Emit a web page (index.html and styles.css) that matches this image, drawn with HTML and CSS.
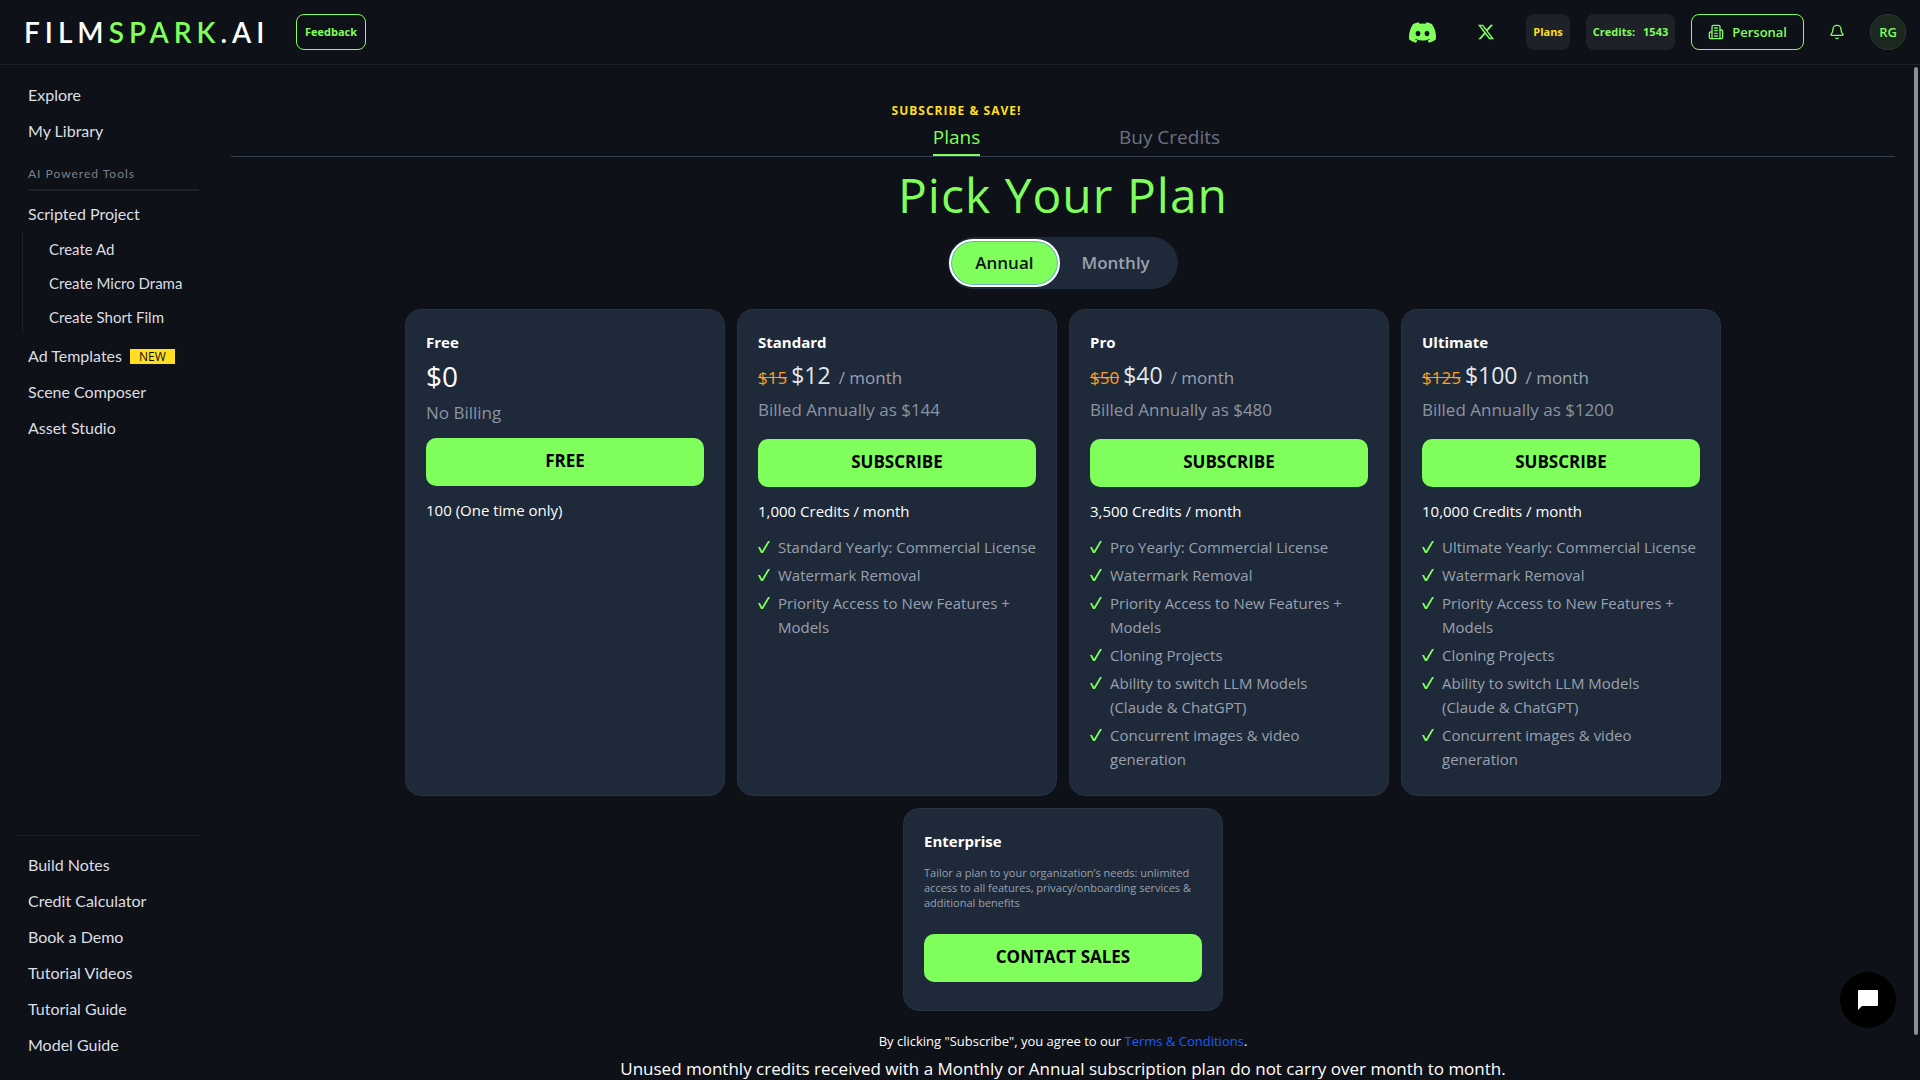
FILE: index.html
```html
<!DOCTYPE html>
<html lang="en">
<head>
<meta charset="utf-8">
<meta name="viewport" content="width=device-width, initial-scale=1">
<title>FilmSpark.AI – Plans</title>
<link rel="stylesheet" href="styles.css">
</head>
<body>
<header class="topbar">
  <a class="logo" href="#">FILM<span class="logo-accent">SPARK</span>.AI</a>
  <button class="btn-outline btn-feedback" type="button">Feedback</button>
  <div class="topbar-actions">
    <a class="social" href="#" aria-label="Discord">
      <svg width="27" height="27" viewBox="0 0 24 24" fill="currentColor"><path d="M20.317 4.37a19.79 19.79 0 0 0-4.885-1.515.074.074 0 0 0-.079.037c-.21.375-.444.864-.608 1.25a18.27 18.27 0 0 0-5.487 0 12.64 12.64 0 0 0-.617-1.25.077.077 0 0 0-.079-.037A19.736 19.736 0 0 0 3.677 4.37a.07.07 0 0 0-.032.027C.533 9.046-.32 13.58.099 18.057a.082.082 0 0 0 .031.057 19.9 19.9 0 0 0 5.993 3.03.078.078 0 0 0 .084-.028 14.09 14.09 0 0 0 1.226-1.994.076.076 0 0 0-.041-.106 13.107 13.107 0 0 1-1.872-.892.077.077 0 0 1-.008-.128 10.2 10.2 0 0 0 .372-.292.074.074 0 0 1 .077-.01c3.928 1.793 8.18 1.793 12.062 0a.074.074 0 0 1 .078.01c.12.098.246.198.373.292a.077.077 0 0 1-.006.127 12.299 12.299 0 0 1-1.873.892.077.077 0 0 0-.041.107c.36.698.772 1.362 1.225 1.993a.076.076 0 0 0 .084.028 19.839 19.839 0 0 0 6.002-3.03.077.077 0 0 0 .032-.054c.5-5.177-.838-9.674-3.549-13.66a.061.061 0 0 0-.031-.03zM8.02 15.33c-1.183 0-2.157-1.085-2.157-2.419 0-1.333.956-2.419 2.157-2.419 1.21 0 2.176 1.096 2.157 2.42 0 1.333-.956 2.418-2.157 2.418zm7.975 0c-1.183 0-2.157-1.085-2.157-2.419 0-1.333.955-2.419 2.157-2.419 1.21 0 2.176 1.096 2.157 2.42 0 1.333-.946 2.418-2.157 2.418z"/></svg>
    </a>
    <a class="social" href="#" aria-label="X">
      <svg width="18" height="18" viewBox="0 0 24 24" fill="currentColor"><path d="M18.244 2.25h3.308l-7.227 8.26 8.502 11.24H16.17l-5.214-6.817L4.99 21.75H1.68l7.73-8.835L1.254 2.25H8.08l4.713 6.231zm-1.161 17.52h1.833L7.084 4.126H5.117z"/></svg>
    </a>
    <a class="chip chip-plans" href="#">Plans</a>
    <a class="chip" href="#"><span>Credits:</span><span>1543</span></a>
    <button class="btn-outline btn-workspace" type="button">
      <svg width="16" height="16" viewBox="0 0 24 24" fill="none" stroke="currentColor" stroke-width="2" stroke-linecap="round" stroke-linejoin="round"><path d="M6 22V4a2 2 0 0 1 2-2h8a2 2 0 0 1 2 2v18Z"/><path d="M6 12H4a2 2 0 0 0-2 2v6a2 2 0 0 0 2 2h2"/><path d="M18 9h2a2 2 0 0 1 2 2v9a2 2 0 0 1-2 2h-2"/><path d="M10 6h4M10 10h4M10 14h4M10 18h4"/></svg>
      Personal
    </button>
    <button class="bell" type="button" aria-label="Notifications">
      <svg width="16" height="16" viewBox="0 0 24 24" fill="none" stroke="currentColor" stroke-width="2" stroke-linecap="round" stroke-linejoin="round"><path d="M3.262 15.326A1 1 0 0 0 4 17h16a1 1 0 0 0 .74-1.673C19.41 13.956 18 12.499 18 8A6 6 0 0 0 6 8c0 4.499-1.411 5.956-2.738 7.326"/><path d="M10.268 21a2 2 0 0 0 3.464 0"/></svg>
    </button>
    <button class="avatar" type="button">RG</button>
  </div>
</header>

<div class="shell">
  <aside class="sidebar">
    <nav class="nav">
      <a href="#">Explore</a>
      <a href="#">My Library</a>
      <h2 class="nav-heading">AI Powered Tools</h2>
      <a href="#">Scripted Project</a>
      <div class="subnav">
        <a href="#">Create Ad</a>
        <a href="#">Create Micro Drama</a>
        <a href="#">Create Short Film</a>
      </div>
      <a href="#">Ad Templates <span class="badge">NEW</span></a>
      <a href="#">Scene Composer</a>
      <a href="#">Asset Studio</a>
    </nav>
    <nav class="nav nav-bottom">
      <a href="#">Build Notes</a>
      <a href="#">Credit Calculator</a>
      <a href="#">Book a Demo</a>
      <a href="#">Tutorial Videos</a>
      <a href="#">Tutorial Guide</a>
      <a href="#">Model Guide</a>
    </nav>
  </aside>

  <main class="content">
    <div class="tabs">
      <div class="tab-col">
        <span class="save">SUBSCRIBE &amp; SAVE!</span>
        <button class="tab tab-active" type="button">Plans</button>
      </div>
      <div class="tab-col">
        <button class="tab" type="button">Buy Credits</button>
      </div>
    </div>

    <h1 class="title">Pick Your Plan</h1>

    <div class="toggle">
      <button class="toggle-option toggle-on" type="button">Annual</button>
      <button class="toggle-option" type="button">Monthly</button>
    </div>

    <section class="plans">
      <article class="card card-free">
        <h2 class="plan-name">Free</h2>
        <p class="price"><span class="amount-free">$0</span></p>
        <p class="billing">No Billing</p>
        <button class="cta" type="button">FREE</button>
        <p class="credits">100 (One time only)</p>
      </article>
      <article class="card">
        <h2 class="plan-name">Standard</h2>
        <p class="price"><s class="was">$15</s> <span class="amount">$12</span> <span class="per">/ month</span></p>
        <p class="billing">Billed Annually as $144</p>
        <button class="cta" type="button">SUBSCRIBE</button>
        <p class="credits">1,000 Credits / month</p>
        <ul class="features">
          <li>Standard Yearly: Commercial License</li>
          <li>Watermark Removal</li>
          <li>Priority Access to New Features + Models</li>
        </ul>
      </article>
      <article class="card">
        <h2 class="plan-name">Pro</h2>
        <p class="price"><s class="was">$50</s> <span class="amount">$40</span> <span class="per">/ month</span></p>
        <p class="billing">Billed Annually as $480</p>
        <button class="cta" type="button">SUBSCRIBE</button>
        <p class="credits">3,500 Credits / month</p>
        <ul class="features">
          <li>Pro Yearly: Commercial License</li>
          <li>Watermark Removal</li>
          <li>Priority Access to New Features + Models</li>
          <li>Cloning Projects</li>
          <li><span>Ability to switch LLM Models<br>(Claude &amp; ChatGPT)</span></li>
          <li>Concurrent images &amp; video generation</li>
        </ul>
      </article>
      <article class="card">
        <h2 class="plan-name">Ultimate</h2>
        <p class="price"><s class="was">$125</s> <span class="amount">$100</span> <span class="per">/ month</span></p>
        <p class="billing">Billed Annually as $1200</p>
        <button class="cta" type="button">SUBSCRIBE</button>
        <p class="credits">10,000 Credits / month</p>
        <ul class="features">
          <li>Ultimate Yearly: Commercial License</li>
          <li>Watermark Removal</li>
          <li>Priority Access to New Features + Models</li>
          <li>Cloning Projects</li>
          <li><span>Ability to switch LLM Models<br>(Claude &amp; ChatGPT)</span></li>
          <li>Concurrent images &amp; video generation</li>
        </ul>
      </article>
      <article class="card card-enterprise">
        <h2 class="plan-name">Enterprise</h2>
        <p class="pitch">Tailor a plan to your organization’s needs: unlimited access to all features, privacy/onboarding services &amp; additional benefits</p>
        <button class="cta" type="button">CONTACT SALES</button>
      </article>
    </section>

    <p class="terms">By clicking "Subscribe", you agree to our <a href="#">Terms &amp; Conditions</a>.</p>
    <p class="note">Unused monthly credits received with a Monthly or Annual subscription plan do not carry over month to month.</p>
  </main>
</div>

<div class="scroll-thumb"></div>
<button class="chat" type="button" aria-label="Open chat">
  <svg width="20" height="20" viewBox="0 0 20 20" fill="#fff"><path d="M1 0h18a1 1 0 0 1 1 1v14a1 1 0 0 1-1 1H4l-4 4V1a1 1 0 0 1 1-1z"/></svg>
</button>
</body>
</html>
```
FILE: styles.css
```css
:root {
  --bg: #0e1118;
  --line: #1d2129;
  --card: #1e2939;
  --card-line: #29323f;
  --green: #80ff5c;
  --yellow: #ffdf20;
  --muted: #99a1af;
}

* { box-sizing: border-box; }

body {
  margin: 0;
  height: 100vh;
  display: flex;
  flex-direction: column;
  overflow: hidden;
  background: var(--bg);
  color: #fff;
  font: 15px/24px "Open Sans", "Noto Sans", sans-serif;
}

h1, h2, p, ul { margin: 0; padding: 0; }
a { color: inherit; text-decoration: none; }
button { font: inherit; color: inherit; background: none; border: 0; padding: 0; cursor: pointer; }
svg { display: block; }

/* Top bar */
.topbar {
  flex: none;
  display: flex;
  align-items: center;
  height: 65px;
  padding: 0 14px 0 24px;
  border-bottom: 1px solid var(--line);
}
.logo {
  width: 272px;
  font: 600 28px/36px Lato, sans-serif;
  letter-spacing: 5px;
}
.logo-accent { color: var(--green); }
.btn-outline {
  height: 36px;
  border: 1px solid var(--green);
  border-radius: 8px;
  color: var(--green);
  font-weight: 600;
}
.btn-feedback { padding: 0 8px; font-size: 11px; font-weight: 700; }
.topbar-actions {
  margin-left: auto;
  display: flex;
  align-items: center;
  gap: 16px;
  color: var(--green);
}
.social { width: 48px; display: flex; justify-content: center; }
.chip {
  display: flex;
  align-items: center;
  gap: 8px;
  height: 36px;
  padding: 0 7px;
  border-radius: 8px;
  background: #1e2128;
  font-size: 11px;
  font-weight: 700;
}
.chip-plans { color: var(--yellow); }
.btn-workspace {
  display: flex;
  align-items: center;
  gap: 8px;
  padding: 0 16px;
  font-size: 13px;
}
.bell { width: 34px; display: flex; justify-content: center; }
.avatar {
  width: 36px;
  height: 36px;
  border: 1px solid #274029;
  border-radius: 50%;
  background: #1b2820;
  font-size: 13px;
  font-weight: 600;
}

/* Shell */
.shell { flex: 1; min-height: 0; display: flex; }
.sidebar {
  flex: none;
  width: 215px;
  padding: 12px 16px 17px;
  display: flex;
  flex-direction: column;
  justify-content: space-between;
  color: #dcdee3;
  font: 16px/36px Lato, sans-serif;
}
.nav { display: flex; flex-direction: column; padding-left: 12px; }
.nav a { display: flex; align-items: center; gap: 8px; }
.nav-heading {
  margin: 17px 0 5px;
  padding-bottom: 7px;
  border-bottom: 2px solid var(--line);
  color: #7d8087;
  font-size: 12px;
  font-weight: 400;
  line-height: 16px;
  letter-spacing: 1px;
}
.subnav {
  margin: 0 0 4px -6px;
  padding-left: 26px;
  border-left: 1px solid var(--line);
  font-size: 15px;
  line-height: 34px;
}
.badge {
  padding: 0 9px;
  background: var(--yellow);
  color: #0e1118;
  font: 12px/15px "Open Sans", sans-serif;
}
.nav-bottom { padding: 11px 0 0 12px; border-top: 1px solid var(--line); }

/* Content */
.content {
  flex: 1;
  min-width: 0;
  overflow: hidden;
  padding: 38px 25px 0 16px;
  display: flex;
  flex-direction: column;
  align-items: center;
}
.tabs {
  align-self: stretch;
  display: flex;
  justify-content: center;
  align-items: flex-end;
  border-bottom: 1px solid #364153;
}
.tab-col { width: 213px; display: flex; flex-direction: column; align-items: center; gap: 4px; }
.save { color: var(--yellow); font-size: 12px; font-weight: 700; line-height: 16px; letter-spacing: 1px; }
.tab {
  padding-bottom: 3px;
  border-bottom: 2px solid transparent;
  color: #6a7282;
  font-size: 19px;
  line-height: 28px;
}
.tab-active { color: var(--green); border-color: var(--green); }
.title {
  margin: 2px 0 6px;
  color: var(--green);
  font-size: 48px;
  font-weight: 400;
  line-height: 72px;
  letter-spacing: 1px;
}
.toggle { display: flex; padding: 2px 6px 2px 1px; border-radius: 26px; background: var(--card); }
.toggle-option {
  height: 48px;
  padding: 0 22px;
  border-radius: 24px;
  color: var(--muted);
  font-size: 17px;
  font-weight: 600;
}
.toggle-on {
  padding: 0 24px;
  background: var(--green);
  color: #0e1118;
  border: 2px solid #fff;
  box-shadow: inset 0 0 0 1px #6ea8d8;
}

/* Plan cards */
.plans { margin-top: 20px; display: flex; flex-wrap: wrap; justify-content: center; gap: 12px; max-width: 1400px; }
.card {
  width: 320px;
  padding: 20px 20px 24px;
  border: 1px solid var(--card-line);
  border-radius: 16px;
  background: var(--card);
}
.plan-name { font-size: 15px; font-weight: 700; line-height: 24px; }
.price {
  display: flex;
  align-items: baseline;
  gap: 4px;
  height: 40px;
  margin-top: 4px;
  line-height: 34px;
  color: var(--muted);
  font-size: 17px;
}
.was { color: #ff9f1c; }
.amount { color: #e5e7eb; font-size: 23px; }
.amount-free { color: #fff; font-size: 28px; line-height: 36px; }
.per { margin-left: 4px; }
.billing { color: #8b94a3; font-size: 17px; }
.cta {
  display: block;
  width: 100%;
  height: 48px;
  margin: 17px 0 12px;
  padding-bottom: 2px;
  border-radius: 10px;
  background: var(--green);
  color: #000;
  font-size: 17px;
  font-weight: 700;
}
.card-free .billing { margin-top: 3px; }
.card-free .cta { margin-top: 13px; }
.features {
  margin: 12px -4px 0 0;
  display: flex;
  flex-direction: column;
  gap: 4px;
  list-style: none;
  color: var(--muted);
}
.features li { display: flex; gap: 8px; }
.features li::before {
  content: "";
  flex: none;
  width: 12px;
  height: 24px;
  background: var(--green);
  clip-path: polygon(0 12px, 2px 12px, 4px 16px, 10px 6px, 12px 6px, 5px 18px, 3px 18px);
}
.card-enterprise { padding-bottom: 28px; }
.pitch { margin-top: 12px; color: var(--muted); font-size: 11px; line-height: 15px; }
.card-enterprise .cta { margin: 24px 0 0; }

.terms { margin-top: 20px; font-size: 13px; line-height: 20px; }
.terms a { color: #155dfc; }
.note { margin-top: 8px; font-size: 17px; line-height: 20px; white-space: nowrap; }

/* Floating pieces */
.scroll-thumb {
  position: fixed;
  top: 67px;
  right: 2px;
  bottom: 45px;
  width: 4px;
  border-radius: 2px;
  background: #8e8f94;
}
.chat {
  position: fixed;
  right: 24px;
  bottom: 52px;
  width: 56px;
  height: 56px;
  display: flex;
  align-items: center;
  justify-content: center;
  border-radius: 50%;
  background: #000;
}
```
